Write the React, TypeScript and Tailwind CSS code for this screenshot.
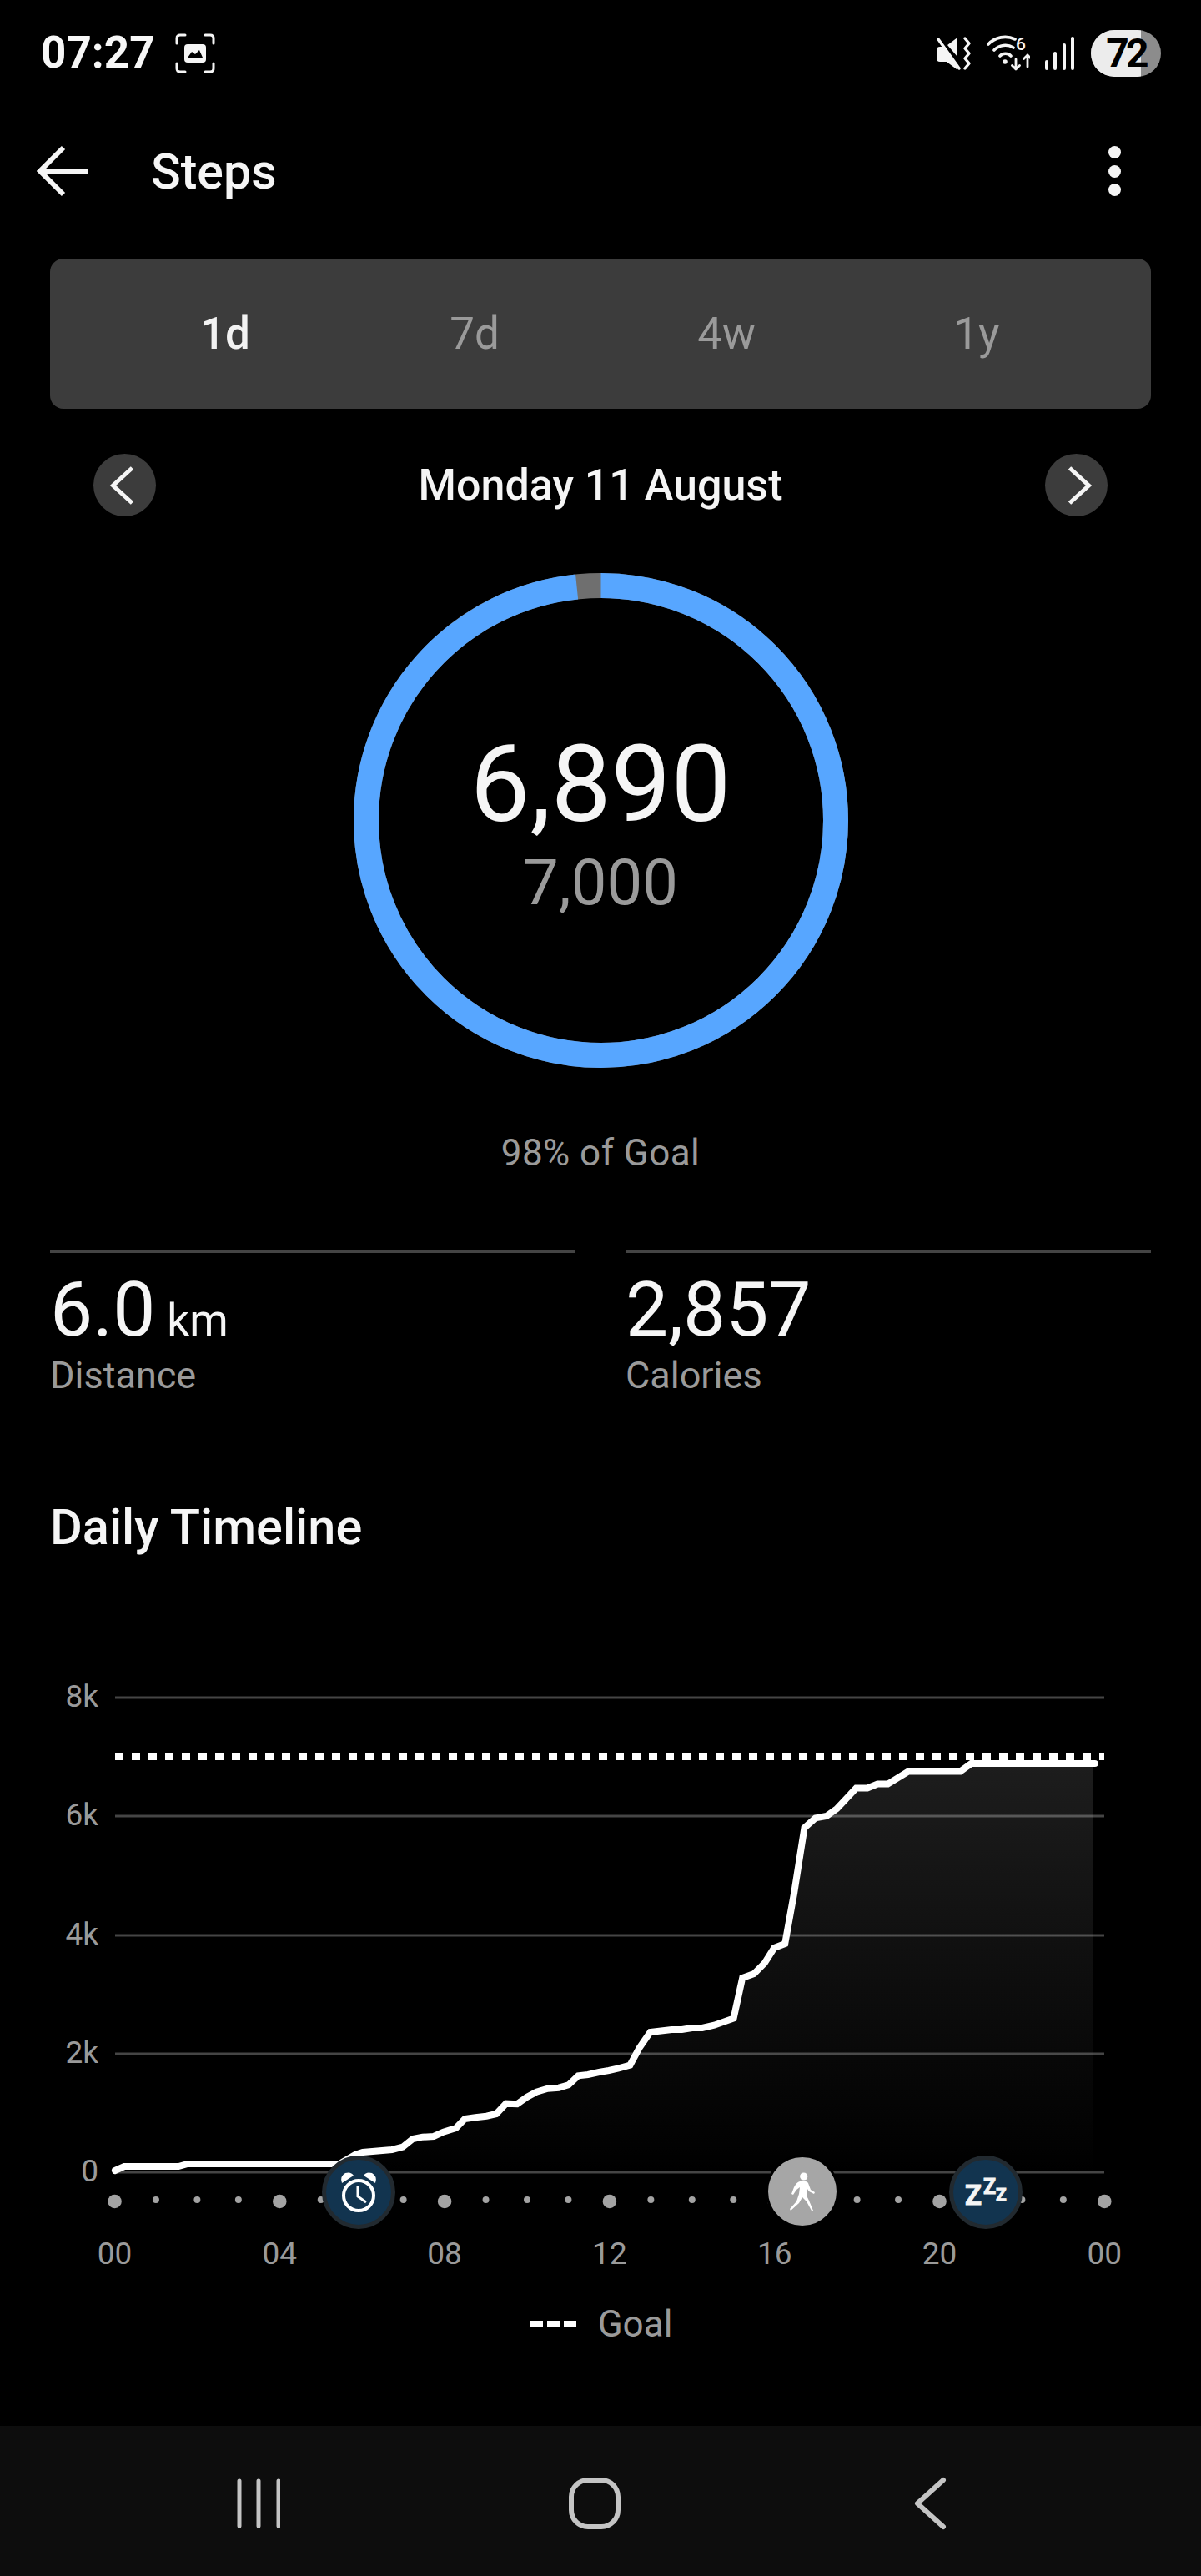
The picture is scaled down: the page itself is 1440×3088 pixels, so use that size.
const curve = [
  [138, 2602], [149, 2597], [214, 2597], [225, 2594], [407, 2594], [426, 2583], [435, 2580],
  [470, 2577], [483, 2573.7], [495, 2564], [506.7, 2561.7], [520, 2561], [531.7, 2555.7],
  [546.7, 2551], [557.3, 2540], [570, 2538.3], [583.3, 2536.7], [595, 2534], [606.7, 2521.7],
  [620, 2522.3], [631.7, 2514], [643.3, 2507.7], [656.7, 2503.7], [670, 2502.7], [681.7, 2499.3],
  [693.3, 2488.3], [705, 2487], [718.3, 2484], [730, 2482], [741.7, 2479.3], [755.5, 2475.5],
  [766.5, 2455], [779.6, 2436], [805.3, 2433], [817.6, 2433], [829.8, 2431], [842, 2431],
  [856.3, 2427.7], [879.6, 2419.4], [890.2, 2371], [904, 2366], [916.7, 2353.3], [928.2, 2335],
  [941.2, 2330], [952.2, 2269], [964.5, 2191], [977.6, 2179.4], [991, 2177], [1003.3, 2168.3],
  [1026.5, 2143.4], [1040, 2143.4], [1052.2, 2138.6], [1064.5, 2138.6], [1089, 2123.6],
  [1151.4, 2123.6], [1164.5, 2114], [1312.7, 2114],
];
const linePath = curve.map(([x, y], i) => `${i === 0 ? 'M' : 'L'}${x} ${y}`).join(' ');
const fillPath = `${linePath} L1310.6 2114 L1310.6 2604 L138 2604 Z`;

const gridLines = [
  { y: 2035, label: '8k' },
  { y: 2177, label: '6k' },
  { y: 2320, label: '4k' },
  { y: 2462, label: '2k' },
  { y: 2604, label: '0' },
];
const hours = Array.from({ length: 25 }, (_, i) => i);
const hourLabels = ['00', '04', '08', '12', '16', '20', '00'];

function StatusBar() {
  return (
    <div className="flex h-[127px] items-center pl-[49px] pr-[48px]">
      <span className="text-[53px] leading-none font-bold text-[#f7f7f7]">07:27</span>
      <svg className="ml-[24px]" width="48" height="48" viewBox="0 0 48 48" fill="none">
        <path d="M12 2H6Q2 2 2 6V12M36 2H42Q46 2 46 6V12M12 46H6Q2 46 2 42V36M36 46H42Q46 46 46 42V36" stroke="#f5f5f5" strokeWidth="3" strokeLinecap="round" />
        <rect x="11" y="13" width="26" height="22" rx="4" fill="#f5f5f5" />
        <path d="M15 29L20 22L24 25L29 20L33 29Z" fill="#000" />
      </svg>
      <div className="ml-auto flex items-center">
        <svg width="42" height="42" viewBox="0 0 42 42" fill="none">
          <path d="M1 17Q1 13 5 13H8L25 33V40L13 31H5Q1 31 1 27Z" fill="#f5f5f5" />
          <path d="M14 11L26 2V25Z" fill="#f5f5f5" />
          <path d="M3 4L28 39" stroke="#f5f5f5" strokeWidth="3.5" strokeLinecap="round" />
          <path d="M35 3L40 9L35 15L40 21L35 27L40 33L35 39" stroke="#f5f5f5" strokeWidth="3.4" strokeLinecap="round" strokeLinejoin="round" />
        </svg>
        <svg className="ml-[19px]" width="52" height="44" viewBox="1183 42 52 44" fill="none">
          <path d="M1185 53A28 28 0 0 1 1217 47M1192 60A18.5 18.5 0 0 1 1215 57M1199 67A9 9 0 0 1 1212 67" stroke="#f5f5f5" strokeWidth="3.6" strokeLinecap="round" />
          <circle cx="1205" cy="74" r="2.8" fill="#f5f5f5" />
          <text x="1218" y="60" fill="#f5f5f5" className="text-[21px] font-medium">6</text>
          <path d="M1218 71V83M1213.5 78.5L1218 83L1222.5 78.5M1232 80V66M1227.5 70.5L1232 66L1236.5 70.5" stroke="#f5f5f5" strokeWidth="2.8" strokeLinecap="round" strokeLinejoin="round" />
        </svg>
        <svg className="ml-[17px]" width="38" height="42" viewBox="0 0 38 42" fill="none" stroke="#f5f5f5" strokeWidth="4" strokeLinecap="round">
          <path d="M3 31V39M13 21V39M24 11V39M34 3V39" />
        </svg>
        <div className="relative ml-[18px] flex h-[56px] w-[84px] items-center justify-center overflow-hidden rounded-full bg-[#8c8c8c]">
          <div className="absolute inset-y-0 left-0 w-[60px] bg-[#ececec]" />
          <span className="relative text-[48px] leading-none font-bold tracking-[-0.08em] text-black">72</span>
        </div>
      </div>
    </div>
  );
}

function AppBar() {
  return (
    <div className="flex h-[156px] items-center pl-[44px] pr-[96px]">
      <svg width="64" height="64" viewBox="0 0 64 64" fill="none" stroke="#f5f5f5" strokeWidth="6">
        <path d="M61 32H6M32 4L4 32L32 60" />
      </svg>
      <span className="ml-[73px] text-[59px] leading-none font-medium text-[#f5f5f5]">Steps</span>
      <div className="ml-auto flex flex-col gap-[7.5px]">
        <div className="size-[15px] rounded-full bg-[#f5f5f5]" />
        <div className="size-[15px] rounded-full bg-[#f5f5f5]" />
        <div className="size-[15px] rounded-full bg-[#f5f5f5]" />
      </div>
    </div>
  );
}

function Tabs() {
  return (
    <div className="mx-[60px] mt-[27px] grid h-[180px] grid-cols-4 items-center rounded-[16px] bg-[#3c3c3c] px-[60px] text-center text-[53px] leading-none text-[#9a9a9a]">
      <span className="font-medium text-[#f2f2f2]">1d</span>
      <span className="pr-[2px]">7d</span>
      <span className="pl-[2px]">4w</span>
      <span className="pl-[2px]">1y</span>
    </div>
  );
}

function DateRow() {
  return (
    <div className="mt-[54px] flex items-center justify-between px-[112px]">
      <div className="size-[75px] rounded-full bg-[#3c3c3c]">
        <svg width="75" height="75" viewBox="0 0 75 75" fill="none" stroke="#f5f5f5" strokeWidth="5">
          <path d="M46.5 17L23.5 38L46.5 59" />
        </svg>
      </div>
      <span className="text-[52px] leading-none font-medium text-[#f5f5f5]">Monday 11 August</span>
      <div className="size-[75px] rounded-full bg-[#3c3c3c]">
        <svg width="75" height="75" viewBox="0 0 75 75" fill="none" stroke="#f5f5f5" strokeWidth="5">
          <path d="M29.5 17L52.5 38L29.5 59" />
        </svg>
      </div>
    </div>
  );
}

function Ring() {
  return (
    <div className="relative mx-auto mt-[68px] size-[593px]">
      <svg className="absolute inset-0" width="593" height="593" viewBox="0 0 593 593" fill="none" strokeWidth="30">
        <circle cx="296.5" cy="296.5" r="281.5" stroke="#6f6f6f" />
        <circle cx="296.5" cy="296.5" r="281.5" stroke="#57a6ff" strokeDasharray="1739 1768.7" transform="rotate(-90 296.5 296.5)" />
      </svg>
      <div className="relative flex flex-col items-center pt-[189px]">
        <span className="text-[128px] leading-none text-[#f5f5f5]">6,890</span>
        <span className="mt-[16px] text-[76px] leading-none text-[#9a9a9a]">7,000</span>
      </div>
    </div>
  );
}

function Stat({ value, unit, label }: { value: string; unit?: string; label: string }) {
  return (
    <div>
      <div className="h-[4px] bg-[#444444]" />
      <div className="mt-[22px] flex items-baseline gap-[14px] text-[#f5f5f5]">
        <span className="text-[91px] leading-[92px]">{value}</span>
        {unit && <span className="text-[53px] leading-none">{unit}</span>}
      </div>
      <div className="mt-[10px] text-[45px] leading-none text-[#9a9a9a]">{label}</div>
    </div>
  );
}

function Chart() {
  return (
    <div className="relative mt-[139px] h-[740px]">
      <svg width="1440" height="740" viewBox="0 2000 1440 740" fill="none">
        <defs>
          <linearGradient id="stepsFill" x1="0" y1="2114" x2="0" y2="2604" gradientUnits="userSpaceOnUse">
            <stop offset="0" stopColor="#1d1d1d" />
            <stop offset="1" stopColor="#000000" />
          </linearGradient>
        </defs>
        <path d={fillPath} fill="url(#stepsFill)" />
        {gridLines.map((g) => (
          <g key={g.label}>
            <line x1="138" x2="1324" y1={g.y} y2={g.y} stroke="#ffffff" strokeOpacity="0.27" strokeWidth="3" />
            <text x="118" y={g.y + 11} textAnchor="end" fill="#9a9a9a" className="text-[37px]">{g.label}</text>
          </g>
        ))}
        <line x1="138" x2="1324" y1="2106" y2="2106" stroke="#ffffff" strokeWidth="8" strokeDasharray="10 10" />
        <path d={linePath} stroke="#ffffff" strokeWidth="8" strokeLinecap="round" />
        {hours.map((h) => {
          const x = 137.5 + h * 49.45;
          const big = h % 4 === 0;
          return <circle key={h} cx={x} cy={big ? 2639 : 2637} r={big ? 8.3 : 4} fill="#a3a3a3" />;
        })}
        {hourLabels.map((label, i) => (
          <text key={i} x={137.5 + i * 197.8} y="2714" textAnchor="middle" fill="#9a9a9a" className="text-[37px]">{label}</text>
        ))}
      </svg>

      <div className="absolute left-[385.5px] top-[584px] size-[88px] rounded-full border-[5px] border-[#222a30] bg-[#12344f]">
        <svg className="absolute -inset-[5px]" width="88" height="88" viewBox="0 0 88 88" fill="none">
          <circle cx="44" cy="48" r="18" stroke="#ffffff" strokeWidth="4" />
          <path d="M24 33Q21 25 28 21Q35 19 38 24Z" fill="#ffffff" />
          <path d="M64 33Q67 25 60 21Q53 19 50 24Z" fill="#ffffff" />
          <path d="M43 37V49L53 56" stroke="#ffffff" strokeWidth="3" />
        </svg>
      </div>
      <div className="absolute left-[918px] top-[583px] size-[88px] rounded-full border-[3px] border-black bg-[#a6a6a6]">
        <svg className="absolute -inset-[3px]" width="88" height="88" viewBox="0 0 88 88" fill="#ffffff">
          <circle cx="45.7" cy="26" r="4.6" />
          <path d="M41 32H48Q50 32 51 34L54 42L59 45L58 47L52 44L50 41L49 49L52 55L57 67L55 67L49 56L44 51L40 58L30 67L29 65L37 56L40 47L41 39L37 42L33 48L31 47L34 39Q37 33 41 32Z" />
        </svg>
      </div>
      <div className="absolute left-[1138px] top-[584px] size-[88px] rounded-full border-[5px] border-[#222a30] bg-[#12344f]">
        <svg className="absolute -inset-[5px]" width="88" height="88" viewBox="0 0 88 88" fill="#f5f5f5" stroke="#f5f5f5" strokeWidth="0.8">
          <text x="19" y="59" className="text-[33px] font-bold">Z</text>
          <text x="41" y="46" className="text-[25px] font-bold">Z</text>
          <text x="56" y="54" className="text-[21px] font-bold">Z</text>
        </svg>
      </div>
    </div>
  );
}

function Legend() {
  return (
    <div className="mt-[20px] flex h-[52px] items-center justify-center pl-[2px]">
      <div className="flex gap-[5px]">
        <div className="h-2 w-[15px] bg-white" />
        <div className="h-2 w-[15px] bg-white" />
        <div className="h-2 w-[15px] bg-white" />
      </div>
      <span className="ml-[26px] text-[44px] leading-none text-[#9a9a9a]">Goal</span>
    </div>
  );
}

function NavBar() {
  return (
    <div className="mt-auto flex h-[180px] items-center bg-[#0d0d0d] pl-[284px] pt-[5px]">
      <svg width="52" height="60" viewBox="0 0 52 60" fill="none" stroke="#c4c4c4" strokeWidth="5" strokeLinecap="round">
        <path d="M3 3V57M26 3V57M50 3V57" />
      </svg>
      <svg className="ml-[343px]" width="68" height="68" viewBox="0 0 68 68" fill="none">
        <rect x="6" y="6" width="56" height="56" rx="20" stroke="#c4c4c4" strokeWidth="6" />
      </svg>
      <svg className="ml-[346px]" width="44" height="64" viewBox="0 0 44 64" fill="none" stroke="#c4c4c4" strokeWidth="6" strokeLinecap="round" strokeLinejoin="round">
        <path d="M38 4L7 32L38 60" />
      </svg>
    </div>
  );
}

export default function App() {
  return (
    <div className="flex h-[3088px] w-[1440px] flex-col overflow-hidden bg-black font-['Roboto',sans-serif]">
      <StatusBar />
      <AppBar />
      <Tabs />
      <DateRow />
      <Ring />
      <div className="mt-[80px] text-center text-[44px] leading-none tracking-[0.01em] text-[#9a9a9a]">98% of Goal</div>
      <div className="mt-[94px] grid grid-cols-2 gap-[60px] px-[60px]">
        <Stat value="6.0" unit="km" label="Distance" />
        <Stat value="2,857" label="Calories" />
      </div>
      <div className="mt-[130px] pl-[60px] text-[59.5px] leading-[60px] font-medium text-[#f5f5f5]">Daily Timeline</div>
      <Chart />
      <Legend />
      <NavBar />
    </div>
  );
}
